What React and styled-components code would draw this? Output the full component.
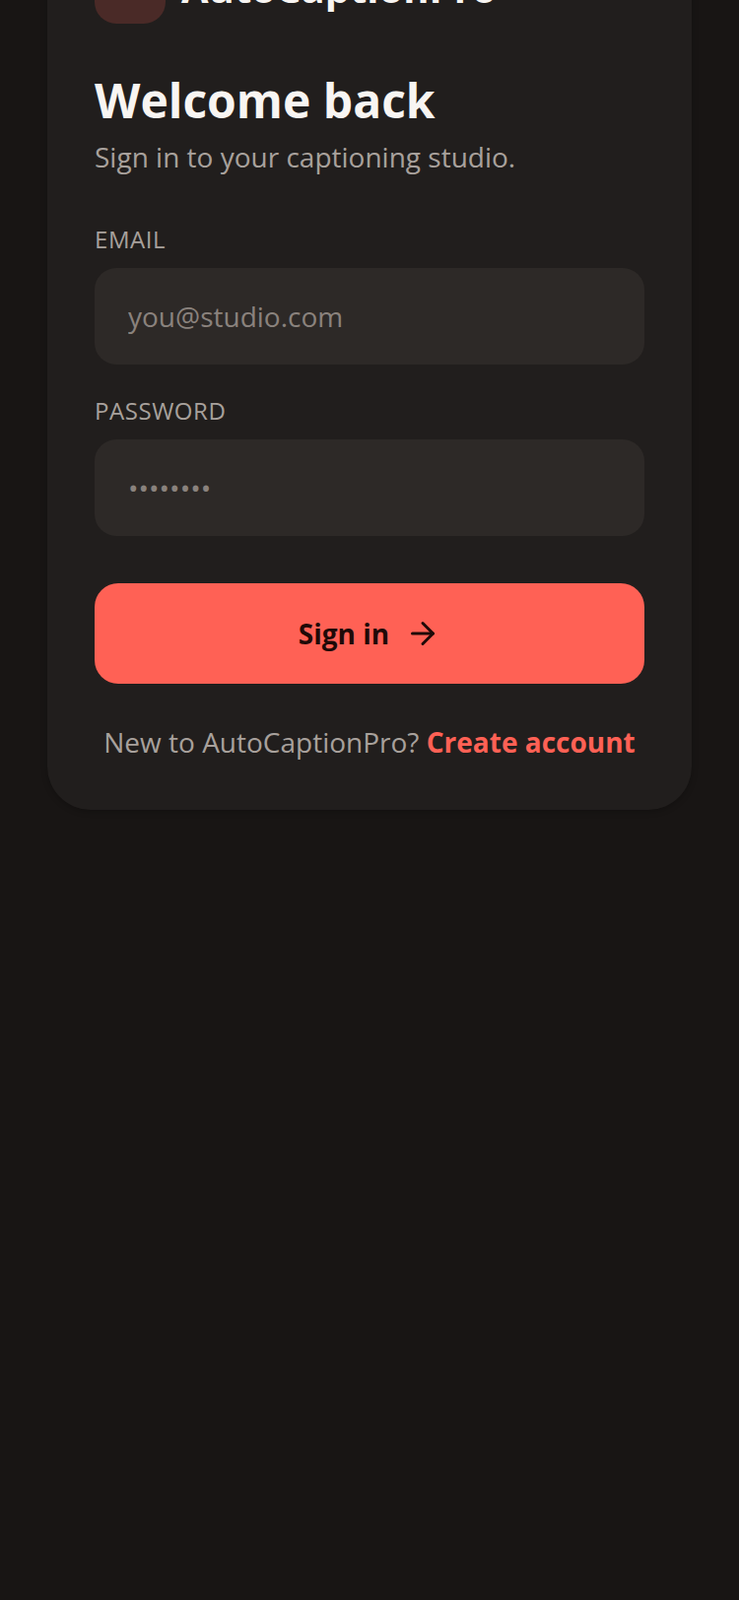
import React from 'react';
import styled, { createGlobalStyle } from 'styled-components';

const Global = createGlobalStyle`
  html, body {
    margin: 0;
    height: 100%;
    overflow: hidden;
    background: #181514;
  }
  * { box-sizing: border-box; }
`;

const Page = styled.div`
  height: 1624px;
  overflow: hidden;
  padding: 0 48px;
  font-family: "Open Sans", sans-serif;
`;

const Card = styled.div`
  margin-top: -96px;
  padding: 48px 48px 49px;
  background: #211e1d;
  border-radius: 44px;
  box-shadow: 0 2px 6px rgba(0, 0, 0, 0.22);
`;

const Brand = styled.div`
  display: flex;
  align-items: center;
  gap: 16px;
  height: 72px;
`;

const Logo = styled.div`
  width: 72px;
  height: 72px;
  border-radius: 22px;
  background: #4a2a27;
`;

const BrandName = styled.div`
  padding-bottom: 2px;
  font-size: 40px;
  font-weight: 700;
  color: #f8f5f2;
`;

const Title = styled.h1`
  margin: 46px 0 0;
  font-size: 48px;
  line-height: 64px;
  font-weight: 700;
  color: #f8f5f2;
`;

const Subtitle = styled.p`
  margin: 5px 0 0;
  font-size: 28px;
  line-height: 40px;
  color: #a8a19c;
`;

const Label = styled.label`
  display: block;
  margin-top: ${(p) => p.$top}px;
  font-size: 24px;
  line-height: 32px;
  letter-spacing: 0.55px;
  color: #a8a19c;
  text-transform: uppercase;
`;

const Input = styled.input`
  display: block;
  width: 100%;
  height: 98px;
  margin-top: 13px;
  padding: 0 34px;
  border: 0;
  outline: 0;
  border-radius: 22px;
  background: #2d2927;
  font-family: inherit;
  font-size: 28px;
  color: #8a827d;

  &::placeholder {
    color: #8a827d;
    opacity: 1;
  }
`;

const Submit = styled.button`
  display: flex;
  align-items: center;
  justify-content: center;
  gap: 16px;
  width: 100%;
  height: 102px;
  margin-top: 48px;
  border: 0;
  border-radius: 24px;
  background: #ff6155;
  color: #1f0a08;
  font-family: inherit;
  font-size: 28px;
  font-weight: 700;
`;

const Footer = styled.p`
  margin: 39px 0 0;
  font-size: 28px;
  line-height: 40px;
  text-align: center;
  color: #a8a19c;
  white-space: nowrap;
`;

const Link = styled.a`
  font-weight: 700;
  color: #ff6155;
`;

export default function App() {
  return (
    <Page>
      <Global />
      <Card>
        <Brand>
          <Logo />
          <BrandName>AutoCaptionPro</BrandName>
        </Brand>
        <Title>Welcome back</Title>
        <Subtitle>Sign in to your captioning studio.</Subtitle>
        <Label $top={48}>Email</Label>
        <Input type="email" placeholder="you@studio.com" />
        <Label $top={31}>Password</Label>
        <Input type="text" placeholder="••••••••" />
        <Submit>
          Sign in
          <svg width="36" height="36" viewBox="0 0 24 24" fill="none" stroke="currentColor" strokeWidth="2" strokeLinecap="round" strokeLinejoin="round">
            <path d="M5 12h14" />
            <path d="m12 5 7 7-7 7" />
          </svg>
        </Submit>
        <Footer>
          New to AutoCaptionPro? <Link>Create account</Link>
        </Footer>
      </Card>
    </Page>
  );
}
